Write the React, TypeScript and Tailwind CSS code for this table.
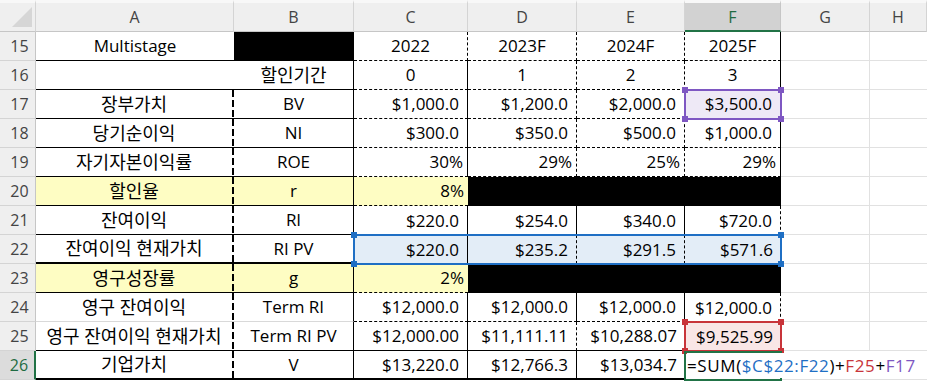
import React from 'react';

type Cell = {
  t?: React.ReactNode;
  al?: 'c' | 'r' | 'p' | 'l';
  kr?: boolean;
  bg?: string;
  cls?: string;
  over?: React.ReactNode;
};

// border pieces, written out so tailwind picks them up
const rS = 'border-r border-r-black';
const rD = 'border-r border-r-black [border-right-style:dashed]!';
// medium dashed line between A and B, drawn as a gradient so the dashes are long like excel's
const rTD =
  'bg-[image:repeating-linear-gradient(to_bottom,#000_0px,#000_7px,transparent_7px,transparent_10px)] bg-[length:2px_100%] bg-right bg-no-repeat pr-[2px]';
const bS = 'border-b border-b-black';
const bD = 'border-b border-b-black [border-bottom-style:dashed]!';
const bT = 'border-b-2 border-b-black';
const bG = 'border-b border-b-[#d9d9d9]';

const yellow = 'bg-[#fefdc3]';
const blue = 'bg-[#e3edf7]';
const black = 'bg-black';

function Sel({ box, dot }: { box: string; dot?: string }) {
  return (
    <div className={`pointer-events-none absolute z-10 border-2 ${box}`}>
      {dot && (
        <>
          <span className={`absolute -left-[4px] -top-[4px] size-[6px] ${dot}`} />
          <span className={`absolute -right-[4px] -top-[4px] size-[6px] ${dot}`} />
          <span className={`absolute -left-[4px] -bottom-[4px] size-[6px] ${dot}`} />
          <span className={`absolute -right-[4px] -bottom-[4px] size-[6px] ${dot}`} />
        </>
      )}
    </div>
  );
}

const formula = (
  <span className="relative z-20 bg-white pr-1 tracking-[0.6px]">
    =SUM(<span className="text-[#1f6fc4]">$C$22:F22</span>)+<span className="text-[#c8343a]">F25</span>+
    <span className="text-[#7e57c2]">F17</span>
  </span>
);

const rows: { n: number; cells: Cell[] }[] = [
  {
    n: 15,
    cells: [
      { t: 'Multistage', cls: bS },
      { bg: black, cls: bS },
      { t: '2022', cls: `${rD} ${bD}` },
      { t: '2023F', cls: `${rD} ${bD}` },
      { t: '2024F', cls: `${rD} ${bD}` },
      { t: '2025F', cls: `${rS} ${bD}` },
    ],
  },
  {
    n: 16,
    cells: [
      { cls: bS },
      { t: '할인기간', kr: true, cls: `${rS} ${bS}` },
      { t: '0', cls: `${rS} ${bD}` },
      { t: '1', cls: `${rD} ${bD}` },
      { t: '2', cls: `${rD} ${bD}` },
      { t: '3', cls: `${rS} ${bD}` },
    ],
  },
  {
    n: 17,
    cells: [
      { t: '장부가치', kr: true, cls: `${rTD} ${bS}` },
      { t: 'BV', cls: `${rS} ${bS}` },
      { t: '$1,000.0', al: 'r', cls: `${rS} ${bD}` },
      { t: '$1,200.0', al: 'r', cls: `${rD} ${bD}` },
      { t: '$2,000.0', al: 'r', cls: `${rD} ${bD}` },
      {
        t: '$3,500.0',
        al: 'r',
        bg: 'bg-[#eee9f6]',
        cls: `${rS} ${bD}`,
        over: <Sel box="-left-px -top-px w-[98px] h-[31px] border-[#7e57c2]" dot="bg-[#7e57c2]" />,
      },
    ],
  },
  {
    n: 18,
    cells: [
      { t: '당기순이익', kr: true, cls: `${rTD} ${bS}` },
      { t: 'NI', cls: `${rS} ${bS}` },
      { t: '$300.0', al: 'r', cls: `${rS} ${bD}` },
      { t: '$350.0', al: 'r', cls: `${rD} ${bD}` },
      { t: '$500.0', al: 'r', cls: `${rD} ${bD}` },
      { t: '$1,000.0', al: 'r', cls: `${rS} ${bD}` },
    ],
  },
  {
    n: 19,
    cells: [
      { t: '자기자본이익률', kr: true, cls: `${rTD} ${bS}` },
      { t: 'ROE', cls: `${rS} ${bS}` },
      { t: '30%', al: 'p', cls: `${rS} ${bD}` },
      { t: '29%', al: 'p', cls: `${rD} ${bD}` },
      { t: '25%', al: 'p', cls: `${rD} ${bD}` },
      { t: '29%', al: 'p', cls: `${rS} ${bD}` },
    ],
  },
  {
    n: 20,
    cells: [
      { t: '할인율', kr: true, bg: yellow, cls: `${rTD} ${bS}` },
      { t: 'r', bg: yellow, cls: `${rS} ${bS}` },
      { t: '8%', al: 'p', bg: yellow, cls: bD },
      { bg: black },
      { bg: black },
      { bg: black },
    ],
  },
  {
    n: 21,
    cells: [
      { t: '잔여이익', kr: true, cls: `${rTD} ${bS}` },
      { t: 'RI', cls: `${rS} ${bS}` },
      { t: '$220.0', al: 'r', cls: rS },
      { t: '$254.0', al: 'r', cls: rS },
      { t: '$340.0', al: 'r', cls: rS },
      { t: '$720.0', al: 'r', cls: rD },
    ],
  },
  {
    n: 22,
    cells: [
      { t: '잔여이익 현재가치', kr: true, cls: `${rTD} ${bT}` },
      { t: 'RI PV', cls: `${rS} ${bT}` },
      {
        t: '$220.0',
        al: 'r',
        bg: blue,
        cls: rS,
        over: <Sel box="-left-px -top-px w-[429px] h-[31px] border-[#1f6fc4]" dot="bg-[#1f6fc4]" />,
      },
      { t: '$235.2', al: 'r', bg: blue, cls: rD },
      { t: '$291.5', al: 'r', bg: blue, cls: rD },
      { t: '$571.6', al: 'r', bg: blue },
    ],
  },
  {
    n: 23,
    cells: [
      { t: '영구성장률', kr: true, bg: yellow, cls: `${rTD} ${bS}` },
      { t: 'g', bg: yellow, cls: `${rS} ${bS}` },
      { t: '2%', al: 'p', bg: yellow, cls: bD },
      { bg: black },
      { bg: black },
      { bg: black },
    ],
  },
  {
    n: 24,
    cells: [
      { t: '영구 잔여이익', kr: true, cls: `${rTD} ${bG}` },
      { t: 'Term RI', cls: `${rS} ${bG}` },
      { t: '$12,000.0', al: 'r', cls: `${rS} ${bD}` },
      { t: '$12,000.0', al: 'r', cls: `${rS} ${bD}` },
      { t: '$12,000.0', al: 'r', cls: `${rS} ${bD}` },
      { t: '$12,000.0', al: 'r', cls: rD },
    ],
  },
  {
    n: 25,
    cells: [
      { t: '영구 잔여이익 현재가치', kr: true, cls: `${rTD} ${bS}` },
      { t: 'Term RI PV', cls: `${rS} ${bS}` },
      { t: '$12,000.00', al: 'r', cls: `${rS} ${bS}` },
      { t: '$11,111.11', al: 'r', cls: `${rD} ${bS}` },
      { t: '$10,288.07', al: 'r', cls: bS },
      {
        t: '$9,525.99',
        al: 'r',
        bg: 'bg-[#f9e6e6]',
        over: <Sel box="-left-px -top-px w-[98px] h-[31px] border-[#c8343a]" dot="bg-[#c8343a]" />,
      },
    ],
  },
  {
    n: 26,
    cells: [
      { t: '기업가치', kr: true, cls: `${rTD} ${bT}` },
      { t: 'V', cls: `${rS} ${bT}` },
      { t: '$13,220.0', al: 'r', cls: `${rS} ${bT}` },
      { t: '$12,766.3', al: 'r', cls: `${rS} ${bT}` },
      { t: '$13,034.7', al: 'r', cls: bT },
      {
        t: formula,
        al: 'l',
        over: <Sel box="-left-px top-0 w-[98px] h-[30px] border-[#217346]" />,
      },
    ],
  },
];

const cols = ['A', 'B', 'C', 'D', 'E', 'F', 'G', 'H'];

function DataCell({ c }: { c: Cell }) {
  const align =
    c.al === 'r'
      ? 'justify-end pr-2'
      : c.al === 'p'
        ? 'justify-end pr-1'
        : c.al === 'l'
          ? 'justify-start pl-[2px]'
          : 'justify-center';
  return (
    <div
      className={`relative flex items-center whitespace-nowrap text-black ${c.kr ? 'text-[18px]' : 'text-[17px]'} ${align} ${c.bg ?? 'bg-white'} ${c.cls ?? ''}`}
    >
      {c.t}
      {c.over}
    </div>
  );
}

export default function App() {
  return (
    <div className="h-[383px] w-[927px] overflow-hidden bg-white font-['Open_Sans','Noto_Sans_CJK_KR',sans-serif]">
      <div className="grid grid-cols-[36px_198px_120px_114px_109px_108px_96px_89px_1fr] grid-rows-[32px_repeat(12,29px)]">
        {/* corner */}
        <div className="border-b border-r border-t-[3px] border-b-[#c6c6c6] border-r-[#d4d4d4] border-t-[#f8f8f8] bg-[#efefef]">
          <svg width="35" height="28" viewBox="0 0 35 28">
            <polygon points="12,24 32,24 32,4" fill="#d6d6d6" />
          </svg>
        </div>
        {cols.map((l) =>
          l === 'F' ? (
            <div
              key={l}
              className="flex items-center justify-center border-b-2 border-r border-t-[3px] border-b-[#217346] border-r-[#c6c6c6] border-t-[#f8f8f8] bg-[#d2d2d2] text-[16px] text-[#1e6b41]"
            >
              {l}
            </div>
          ) : (
            <div
              key={l}
              className="flex items-center justify-center border-b border-r border-t-[3px] border-b-[#c6c6c6] border-r-[#d4d4d4] border-t-[#f8f8f8] bg-[#efefef] text-[16px] text-[#444]"
            >
              {l}
            </div>
          ),
        )}

        {rows.map((r) => (
          <React.Fragment key={r.n}>
            {r.n === 26 ? (
              <div className="flex items-center justify-center border-b border-r-2 border-b-[#d4d4d4] border-r-[#217346] bg-[#dcdcdc] pl-1 text-[16px] text-[#1e6b41]">
                {r.n}
              </div>
            ) : (
              <div className="flex items-center justify-center border-b border-r border-b-[#d4d4d4] border-r-[#c6c6c6] bg-[#efefef] pl-1 text-[16px] text-[#444]">
                {r.n}
              </div>
            )}
            {r.cells.map((c, i) => (
              <DataCell key={i} c={c} />
            ))}
            <div className={r.n === 26 ? 'border-b border-b-[#e1e1e1] bg-white' : 'border-b border-r border-[#e1e1e1] bg-white'} />
            <div className="border-b border-[#e1e1e1] bg-white" />
          </React.Fragment>
        ))}
      </div>
    </div>
  );
}
